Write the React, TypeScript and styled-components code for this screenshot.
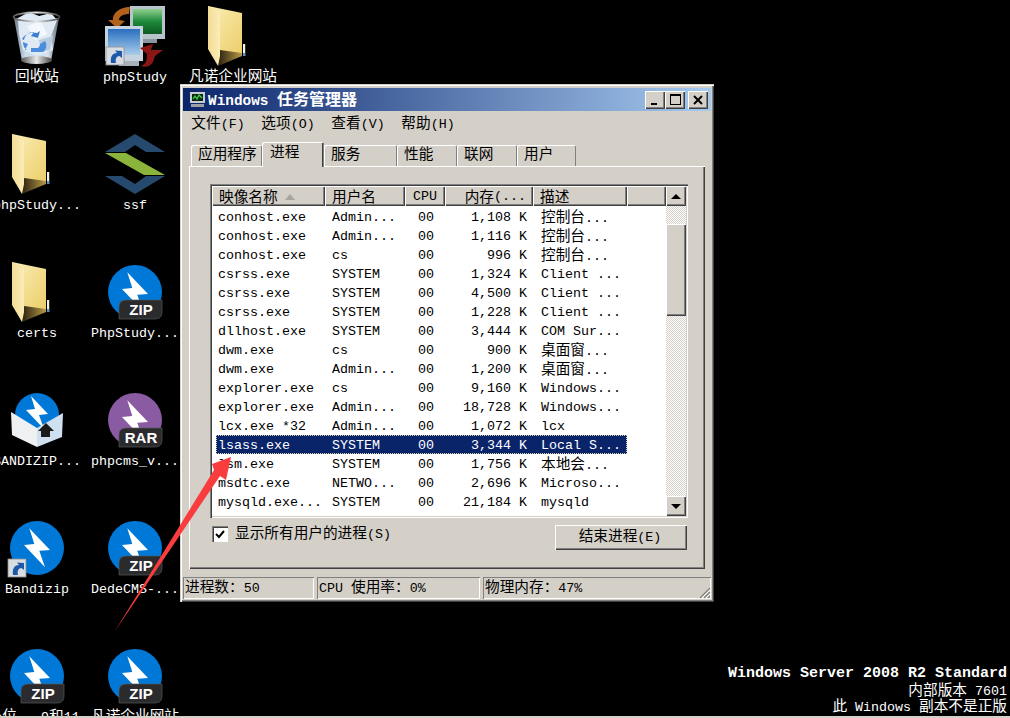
import React from 'react';
import styled, { createGlobalStyle, css } from 'styled-components';

const Global = createGlobalStyle`
  html, body { margin: 0; padding: 0; background: #000; }
  body { font-family: "Liberation Mono", monospace; font-size: 13.33px; }
`;

const raised = css`
  background: #d4d0c8;
  box-shadow: inset 1px 1px 0 #fff, inset -1px -1px 0 #404040, inset -2px -2px 0 #808080;
`;

const Screen = styled.div`
  width: 1010px; height: 718px; display: flex; flex-direction: column; overflow: hidden; background: #000;
`;
const Canvas = styled.div`
  position: relative; flex: 1; overflow: hidden; background: #000;
`;
const Taskbar = styled.div`
  height: 2px; background: #d4d0c8;
`;

const CjkRun = styled.span`
  font-family: "Noto Sans CJK SC", sans-serif; font-size: 14.67px; line-height: 1;
`;
const Mixed = ({ text }: { text: string }) => (
  <>
    {text.split(/([\u3000-\u9fff\uff00-\uffef]+)/).map((part, i) =>
      i % 2 ? <CjkRun key={i}>{part}</CjkRun> : part
    )}
  </>
);

/* ---------- desktop icons ---------- */
const Pin = styled.div<{ $cx: number; $y: number }>`
  position: absolute; left: ${p => p.$cx - 60}px; top: ${p => p.$y}px; width: 120px;
  display: flex; flex-direction: column; align-items: center;
`;
const IconBox = styled.svg`
  width: 60px; height: 61px; display: block; overflow: visible;
`;
const IconLabel = styled.div`
  color: #fff; line-height: 20px; height: 20px; white-space: nowrap; padding-top: 1px;
`;

const Bolt = () => <polygon fill="#fff" points="19.3,7.3 40,29 29.3,29.7 35,46.3 14,24 24.3,23" />;

const Shortcut = ({ x, y }: { x: number; y: number }) => (
  <g transform={`translate(${x} ${y})`}>
    <rect width="18" height="18" fill="#d9dde2" stroke="#8b8f96" strokeWidth="0.8" />
    <path d="M5 16 C4 9 7 6 11 6 L9 3.5 L16 4 L16 11 L13.5 9 C10.5 9 9 12 10 16 Z" fill="#1e58a8" />
  </g>
);

const ArchiveIcon = ({ tag, color }: { tag: string; color: string }) => (
  <IconBox viewBox="0 0 60 61">
    <g transform="translate(3 3)">
      <circle cx="27" cy="27" r="27" fill={color} />
      <Bolt />
      <path d="M11 54 V42 Q11 35 18 35 H54 V47 Q54 54 47 54 Z" fill="#2b2b2d" stroke="#55565a" strokeWidth="0.7" />
      <text x="33" y="50" textAnchor="middle" fill="#fff" fontFamily="Liberation Sans, sans-serif" fontWeight="700" fontSize="15">{tag}</text>
    </g>
  </IconBox>
);

const BandizipIcon = () => (
  <IconBox viewBox="0 0 60 61">
    <g transform="translate(3 3)">
      <circle cx="27" cy="27" r="27" fill="#0078d7" />
      <Bolt />
    </g>
    <Shortcut x={1} y={41} />
  </IconBox>
);

const FolderIcon = () => (
  <IconBox viewBox="0 0 60 61">
    <defs>
      <linearGradient id="fb" x1="0" y1="0" x2="1" y2="1">
        <stop offset="0" stopColor="#fbeeb8" /><stop offset="1" stopColor="#eccd68" />
      </linearGradient>
      <linearGradient id="ff" x1="0" y1="0" x2="1" y2="0">
        <stop offset="0" stopColor="#f3dc94" /><stop offset="1" stopColor="#fbedb8" />
      </linearGradient>
      <linearGradient id="fs" x1="0" y1="0" x2="1" y2="0">
        <stop offset="0" stopColor="#2a2110" /><stop offset="1" stopColor="#b89a48" />
      </linearGradient>
    </defs>
    <polygon points="5,0 39,7 39,49 17,50 5,20" fill="url(#fb)" />
    <polygon points="15,60 39,50 39,47 17,44" fill="url(#fs)" />
    <polygon points="5,0 17,6 17,50 15,60 5,43" fill="url(#ff)" />
    <rect x="40" y="38" width="2.2" height="12" fill="#f6f3dc" />
    <rect x="40" y="47" width="2.2" height="3" fill="#5b8fd0" />
  </IconBox>
);

const RecycleIcon = () => (
  <IconBox viewBox="0 0 60 61">
    <defs>
      <linearGradient id="rb" x1="0" y1="0" x2="1" y2="0">
        <stop offset="0" stopColor="#6f7a84" /><stop offset="0.25" stopColor="#c9dceb" />
        <stop offset="0.75" stopColor="#d5e3ef" /><stop offset="1" stopColor="#5e6a74" />
      </linearGradient>
      <linearGradient id="rm" x1="0" y1="0" x2="1" y2="0">
        <stop offset="0" stopColor="#555" /><stop offset="0.5" stopColor="#e8e8e8" /><stop offset="1" stopColor="#444" />
      </linearGradient>
    </defs>
    <path d="M7 12 L15 55 H44 L52 12 Z" fill="url(#rb)" />
    <polygon points="11,12 22,6 32,10 44,7 50,14 44,30 46,44 30,50 16,44 12,28" fill="#dfeaf4" />
    <polygon points="20,20 34,15 40,28 28,34" fill="#f4f8fc" />
    <polygon points="32,34 46,30 43,44 34,46" fill="#b8cce0" />
    <path d="M17 34 A9 9 0 0 1 27 26 L24 30 L31 32 L33 25 L30 27 A13 13 0 0 0 15 33 Z" fill="#3f7fd2" />
    <path d="M20 44 A9 9 0 0 1 16 36 L21 38 L18 44 Z M24 46 L36 46 A8 8 0 0 0 38 35 L33 38 A4 4 0 0 1 31 42 L24 42 Z" fill="#4c8cdc" />
    <ellipse cx="29.5" cy="11" rx="23" ry="4.5" fill="none" stroke="url(#rm)" strokeWidth="1.8" />
    <ellipse cx="29.5" cy="54" rx="15.5" ry="4" fill="url(#rm)" />
  </IconBox>
);

const PhpStudyIcon = () => (
  <IconBox viewBox="0 0 60 61">
    <defs>
      <linearGradient id="pg" x1="0" y1="0" x2="0" y2="1">
        <stop offset="0" stopColor="#8fd08f" /><stop offset="0.5" stopColor="#1d8a3a" /><stop offset="1" stopColor="#0e5a22" />
      </linearGradient>
      <linearGradient id="pb" x1="0" y1="0" x2="0" y2="1">
        <stop offset="0" stopColor="#2a6fc0" /><stop offset="1" stopColor="#a9cdea" />
      </linearGradient>
    </defs>
    <path d="M25 1 C14 1 7 8 8 14 L3 14 L12 22 L20 15 L14 14 C14 10 19 8 24 8 Z" fill="#b3621c" />
    <rect x="25" y="0" width="35" height="33" fill="#b9c3cc" />
    <rect x="28" y="3" width="29" height="25" fill="url(#pg)" />
    <rect x="38" y="33" width="14" height="4" fill="#8c969e" />
    <rect x="0" y="20" width="38" height="35" fill="#c6d3de" />
    <rect x="3" y="23" width="32" height="26" fill="url(#pb)" />
    <rect x="14" y="55" width="20" height="5" fill="#a8b2bb" />
    <path d="M35 42 L48 38 L46 44 L58 44 L50 50 L48 56 C46 60 40 62 36 60 C42 58 42 52 42 48 Z" fill="#8c1616" />
    <Shortcut x={1} y={41} />
  </IconBox>
);

const SsfIcon = () => (
  <IconBox viewBox="0 0 60 61">
    <polygon points="0,18 30,0 60,18 41,18 30,11 20,18" fill="#264a6e" />
    <polygon points="0,19 21,19 60,41 39,41" fill="#8bb43c" />
    <polygon points="0,42 17,42 30,50 41,42 60,42 30,60" fill="#264a6e" />
  </IconBox>
);

const AndizipIcon = () => (
  <IconBox viewBox="0 0 60 61">
    <circle cx="30" cy="25" r="22" fill="#0078d7" />
    <polygon fill="#fff" points="24,6 41,24 32,25 37,39 19,20 28,19" />
    <polygon points="30,38 56,23 55,47 30,57" fill="#cfe0f0" />
    <polygon points="4,22 30,38 30,57 5,45" fill="#eef0f2" />
    <polygon points="39,33 47,41 43,41 43,47 34,47 34,41 31,41" fill="#1a1a1a" />
  </IconBox>
);

const desktop: { cx: number; y: number; label: string; icon: React.ReactNode }[] = [
  { cx: 37, y: 6, label: '回收站', icon: <RecycleIcon /> },
  { cx: 135, y: 6, label: 'phpStudy', icon: <PhpStudyIcon /> },
  { cx: 233, y: 6, label: '凡诺企业网站', icon: <FolderIcon /> },
  { cx: 37, y: 134, label: 'phpStudy...', icon: <FolderIcon /> },
  { cx: 135, y: 134, label: 'ssf', icon: <SsfIcon /> },
  { cx: 37, y: 262, label: 'certs', icon: <FolderIcon /> },
  { cx: 135, y: 262, label: 'PhpStudy...', icon: <ArchiveIcon tag="ZIP" color="#0078d7" /> },
  { cx: 37, y: 390, label: 'BANDIZIP...', icon: <AndizipIcon /> },
  { cx: 135, y: 390, label: 'phpcms_v...', icon: <ArchiveIcon tag="RAR" color="#8a5aa3" /> },
  { cx: 37, y: 518, label: 'Bandizip', icon: <BandizipIcon /> },
  { cx: 135, y: 518, label: 'DedeCMS-...', icon: <ArchiveIcon tag="ZIP" color="#0078d7" /> },
  { cx: 37, y: 646, label: 'e位...9和11', icon: <ArchiveIcon tag="ZIP" color="#0078d7" /> },
  { cx: 135, y: 646, label: '凡诺企业网站', icon: <ArchiveIcon tag="ZIP" color="#0078d7" /> },
];

/* ---------- window ---------- */
const Win = styled.div`
  position: absolute; left: 180px; top: 84px; width: 534px; height: 518px; box-sizing: border-box;
  padding: 4px 3px 3px; display: flex; flex-direction: column; color: #000;
  background: #d4d0c8;
  box-shadow: inset 1px 1px 0 #d4d0c8, inset 2px 2px 0 #fff, inset -1px -1px 0 #404040, inset -2px -2px 0 #808080;
`;
const TitleBar = styled.div`
  height: 23px; flex: none; display: flex; align-items: center; padding: 0 3px 0 5px;
  background: linear-gradient(90deg, #0a246a, #a6caf0); color: #fff;
`;
const TitleIcon = styled.svg`
  width: 19px; height: 17px; flex: none; margin-right: 1px;
`;
const TitleText = styled.div`
  flex: 1; font-weight: 700; font-size: 14.4px; white-space: pre; margin-top: -1px;
  ${CjkRun} { font-size: 16px; }
`;
const WinButton = styled.button`
  ${raised};
  width: 20px; height: 18px; border: 0; padding: 0; display: flex; align-items: center; justify-content: center;
`;
const CloseGap = styled.div`
  width: 3px; flex: none;
`;
const MenuBar = styled.div`
  height: 24px; flex: none; box-sizing: border-box; display: flex; align-items: center; padding-left: 1px;
`;
const MenuItem = styled.div`
  width: 70px; flex: none; text-align: center; white-space: nowrap; padding-right: 2px; box-sizing: border-box;
`;
const Tabs = styled.div`
  height: 24px; flex: none; margin-top: 7px; padding-left: 8px; display: flex; align-items: flex-end; position: relative; z-index: 1;
`;
const Tab = styled.div<{ $w: number; $active?: boolean }>`
  width: ${p => p.$w}px; height: ${p => (p.$active ? 25 : 21)}px; flex: none; box-sizing: border-box;
  margin-bottom: ${p => (p.$active ? -1 : 0)}px; padding-left: ${p => (p.$active ? 8 : 7)}px;
  background: #d4d0c8; line-height: ${p => (p.$active ? 24 : 22)}px; white-space: nowrap;
  border-radius: 2px 2px 0 0;
  box-shadow: inset 1px 1px 0 #fff, inset -1px 0 0 #808080, ${p => (p.$active ? 'inset -2px 0 0 #404040' : 'inset -2px 0 0 #d4d0c8')};
`;
const Panel = styled.div`
  height: 403px; flex: none; margin: 0 6px; box-sizing: border-box; padding: 18px 17px 0 21px;
  display: flex; flex-direction: column;
  background: #d4d0c8;
  box-shadow: inset 1px 1px 0 #fff, inset -1px -1px 0 #404040, inset -2px -2px 0 #808080;
`;
const ListFrame = styled.div`
  height: 334px; flex: none; box-sizing: border-box; padding: 2px; display: flex; background: #fff;
  box-shadow: inset 1px 1px 0 #808080, inset 2px 2px 0 #404040, inset -1px -1px 0 #fff, inset -2px -2px 0 #d4d0c8;
`;
const ListMain = styled.div`
  flex: 1; min-width: 0; display: flex; flex-direction: column;
`;
const HeaderRow = styled.div`
  height: 20px; flex: none; display: flex; margin-bottom: 1px;
`;
const HeaderCell = styled.div<{ $w?: number; $align?: string }>`
  ${raised};
  width: ${p => (p.$w ? `${p.$w}px` : 'auto')}; flex: ${p => (p.$w ? 'none' : 1)};
  box-sizing: border-box; padding: 1px 7px 0; line-height: 19px; white-space: nowrap; overflow: hidden;
  display: flex; align-items: center; justify-content: ${p => p.$align || 'flex-start'};
`;
const SortArrow = styled.span`
  width: 0; height: 0; margin-left: 7px;
  border-left: 5px solid transparent; border-right: 5px solid transparent; border-bottom: 6px solid #a8a59d;
`;
const Row = styled.div<{ $selected?: boolean }>`
  height: 19px; width: 411px; margin-left: 4px; flex: none; box-sizing: border-box; display: grid; padding-top: 2px;
  grid-template-columns: 110px 80px 40px 88px 93px; line-height: 17px; white-space: nowrap;
  ${p => p.$selected && css`
    background: #0a246a; color: #fff; outline: 1px dotted #d8d4a8; outline-offset: -1px;
  `}
`;
const NameCell = styled.div` padding-left: 2px; `;
const UserCell = styled.div` padding-left: 6px; `;
const CpuCell = styled.div` padding-left: 12px; `;
const MemCell = styled.div` text-align: right; padding-right: 7px; `;
const DescCell = styled.div` padding-left: 7px; `;

const ScrollBar = styled.div`
  width: 20px; flex: none; display: flex; flex-direction: column;
`;
const ScrollBtn = styled.div`
  ${raised};
  height: 20px; flex: none; display: flex; align-items: center; justify-content: center;
`;
const ScrollTrack = styled.div`
  flex: 1; padding-top: 18px; box-sizing: border-box;
  background: conic-gradient(#fff 25%, #d4d0c8 0 50%, #fff 0 75%, #d4d0c8 0) 0 0 / 2px 2px;
`;
const ScrollThumb = styled.div`
  ${raised};
  height: 92px;
`;
const Tri = styled.span<{ $down?: boolean }>`
  width: 0; height: 0; border-left: 5px solid transparent; border-right: 5px solid transparent;
  ${p => (p.$down ? 'border-top: 5px solid #000;' : 'border-bottom: 5px solid #000;')}
`;
const Controls = styled.div`
  display: flex; justify-content: space-between; align-items: flex-start; margin-top: 7px; padding-right: 1px;
`;
const CheckRow = styled.div`
  display: flex; align-items: center; gap: 7px; padding: 1px 0 0 2px; line-height: 14px;
`;
const CheckBox = styled.div`
  width: 16px; height: 16px; background: #fff; display: flex; align-items: center; justify-content: center;
  box-shadow: inset 1px 1px 0 #808080, inset 2px 2px 0 #404040, inset -1px -1px 0 #fff;
`;
const CheckLabel = styled.span`
  margin-top: -1px;
`;
const EndButton = styled.div`
  ${raised};
  width: 132px; height: 25px; line-height: 26px; text-align: center; box-sizing: border-box; padding-right: 2px;
`;
const StatusBar = styled.div`
  height: 22px; flex: none; margin-top: 8px; display: flex; gap: 3px;
`;
const StatusCell = styled.div<{ $w?: number }>`
  position: relative; box-sizing: border-box; line-height: 23px; padding-left: 2px; white-space: nowrap;
  width: ${p => (p.$w ? `${p.$w}px` : 'auto')}; flex: ${p => (p.$w ? 'none' : 1)};
  box-shadow: inset 1px 1px 0 #808080, inset -1px -1px 0 #fff;
`;
const Grip = styled.svg`
  position: absolute; right: 0; bottom: 0; width: 13px; height: 13px;
`;

/* ---------- overlay ---------- */
const Arrow = styled.svg`
  position: absolute; left: 100px; top: 440px; width: 150px; height: 200px; z-index: 3;
`;
const Watermark = styled.div`
  position: absolute; right: 3px; bottom: 2px; color: #fff; text-align: right; white-space: nowrap;
`;
const WatermarkTitle = styled.div`
  font-size: 15px; font-weight: 700; line-height: 17px; height: 17px;
`;
const WatermarkLine = styled.div`
  line-height: 16px; height: 16px;
`;

const rows: [string, string, string, string][] = [
  ['conhost.exe', 'Admin...', '1,108 K', '控制台...'],
  ['conhost.exe', 'Admin...', '1,116 K', '控制台...'],
  ['conhost.exe', 'cs', '996 K', '控制台...'],
  ['csrss.exe', 'SYSTEM', '1,324 K', 'Client ...'],
  ['csrss.exe', 'SYSTEM', '4,500 K', 'Client ...'],
  ['csrss.exe', 'SYSTEM', '1,228 K', 'Client ...'],
  ['dllhost.exe', 'SYSTEM', '3,444 K', 'COM Sur...'],
  ['dwm.exe', 'cs', '900 K', '桌面窗...'],
  ['dwm.exe', 'Admin...', '1,200 K', '桌面窗...'],
  ['explorer.exe', 'cs', '9,160 K', 'Windows...'],
  ['explorer.exe', 'Admin...', '18,728 K', 'Windows...'],
  ['lcx.exe *32', 'Admin...', '1,072 K', 'lcx'],
  ['lsass.exe', 'SYSTEM', '3,344 K', 'Local S...'],
  ['lsm.exe', 'SYSTEM', '1,756 K', '本地会...'],
  ['msdtc.exe', 'NETWO...', '2,696 K', 'Microso...'],
  ['mysqld.exe...', 'SYSTEM', '21,184 K', 'mysqld'],
];

const tabs: [string, number, boolean?][] = [
  ['应用程序', 71], ['进程', 62, true], ['服务', 73], ['性能', 60], ['联网', 60], ['用户', 59],
];

export default function App() {
  return (
    <Screen>
      <Global />
      <Canvas>
        {desktop.map(d => (
          <Pin key={`${d.cx}-${d.y}`} $cx={d.cx} $y={d.y}>
            {d.icon}
            <IconLabel><Mixed text={d.label} /></IconLabel>
          </Pin>
        ))}

        <Win>
          <TitleBar>
            <TitleIcon viewBox="0 0 19 17">
              <rect x="2" y="1" width="15" height="11" fill="#c8ccd0" />
              <rect x="4" y="3" width="11" height="7" fill="#0c2a12" />
              <path d="M5 8 L7 5 L9 8 L11 4 L14 7" stroke="#3fdc4c" strokeWidth="1.2" fill="none" />
              <rect x="3" y="13" width="13" height="3" fill="#9aa0a6" />
            </TitleIcon>
            <TitleText>Windows <Mixed text="任务管理器" /></TitleText>
            <WinButton aria-label="min">
              <svg width="10" height="10" viewBox="0 0 10 10"><rect x="1" y="8" width="6" height="2" fill="#000" /></svg>
            </WinButton>
            <WinButton aria-label="max">
              <svg width="11" height="11" viewBox="0 0 11 11"><rect x="0.5" y="0.5" width="10" height="10" fill="none" stroke="#000" /><rect x="0" y="0" width="11" height="2" fill="#000" /></svg>
            </WinButton>
            <CloseGap />
            <WinButton aria-label="close">
              <svg width="10" height="10" viewBox="0 0 10 10"><path d="M1 1 L9 9 M9 1 L1 9" stroke="#000" strokeWidth="2" /></svg>
            </WinButton>
          </TitleBar>

          <MenuBar>
            {['文件(F)', '选项(O)', '查看(V)', '帮助(H)'].map(m => (
              <MenuItem key={m}><Mixed text={m} /></MenuItem>
            ))}
          </MenuBar>

          <Tabs>
            {tabs.map(([t, w, a]) => (
              <Tab key={t} $w={w} $active={a}><Mixed text={t} /></Tab>
            ))}
          </Tabs>

          <Panel>
            <ListFrame>
              <ListMain>
                <HeaderRow>
                  <HeaderCell $w={113}><Mixed text="映像名称" /><SortArrow /></HeaderCell>
                  <HeaderCell $w={80}><Mixed text="用户名" /></HeaderCell>
                  <HeaderCell $w={40} $align="center">CPU</HeaderCell>
                  <HeaderCell $w={88} $align="flex-end"><Mixed text="内存" />(...</HeaderCell>
                  <HeaderCell $w={94}><Mixed text="描述" /></HeaderCell>
                  <HeaderCell />
                </HeaderRow>
                {rows.map(([n, u, m, d], i) => (
                  <Row key={i} $selected={n === 'lsass.exe'}>
                    <NameCell>{n}</NameCell>
                    <UserCell>{u}</UserCell>
                    <CpuCell>00</CpuCell>
                    <MemCell>{m}</MemCell>
                    <DescCell><Mixed text={d} /></DescCell>
                  </Row>
                ))}
              </ListMain>
              <ScrollBar>
                <ScrollBtn><Tri /></ScrollBtn>
                <ScrollTrack><ScrollThumb /></ScrollTrack>
                <ScrollBtn><Tri $down /></ScrollBtn>
              </ScrollBar>
            </ListFrame>

            <Controls>
              <CheckRow>
                <CheckBox>
                  <svg width="10" height="10" viewBox="0 0 10 10"><path d="M1 5 L4 8 L9 2" stroke="#000" strokeWidth="2" fill="none" /></svg>
                </CheckBox>
                <CheckLabel><Mixed text="显示所有用户的进程(S)" /></CheckLabel>
              </CheckRow>
              <EndButton><Mixed text="结束进程(E)" /></EndButton>
            </Controls>
          </Panel>

          <StatusBar>
            <StatusCell $w={131}><Mixed text="进程数：50" /></StatusCell>
            <StatusCell $w={163}>CPU <Mixed text="使用率：" />0%</StatusCell>
            <StatusCell>
              <Mixed text="物理内存：" />47%
              <Grip viewBox="0 0 13 13">
                <path d="M12 2 L2 12 M12 6 L6 12 M12 10 L10 12" stroke="#808080" strokeWidth="1.2" />
                <path d="M12 4 L4 12 M12 8 L8 12" stroke="#fff" strokeWidth="1" />
              </Grip>
            </StatusCell>
          </StatusBar>
        </Win>

        <Arrow viewBox="0 0 150 200">
          <polygon points="15,191 114,30 112,24 131,17 126,40 120,36" fill="#f93c3e" />
        </Arrow>

        <Watermark>
          <WatermarkTitle>Windows Server 2008 R2 Standard</WatermarkTitle>
          <WatermarkLine><Mixed text="内部版本" /> 7601</WatermarkLine>
          <WatermarkLine><Mixed text="此" /> Windows <Mixed text="副本不是正版" /></WatermarkLine>
        </Watermark>
      </Canvas>
      <Taskbar />
    </Screen>
  );
}
